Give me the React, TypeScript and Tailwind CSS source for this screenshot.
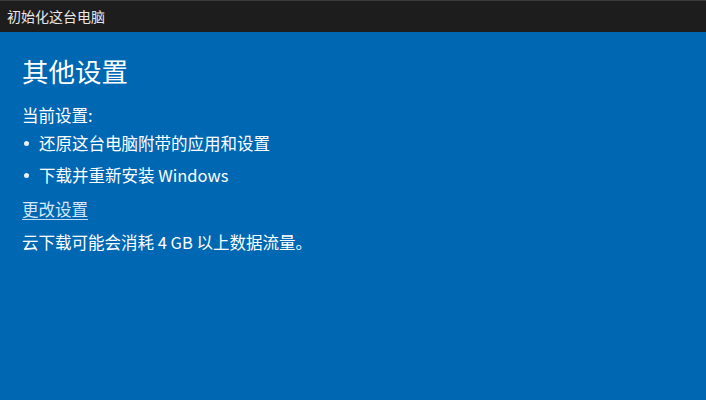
const font = { fontFamily: '"Noto Sans CJK SC", "Noto Sans", sans-serif' };

const Bullet = ({ children }: { children: React.ReactNode }) => (
  <div className="flex items-center h-[32px]">
    <span className="w-[17px] flex pl-[2px]">
      <span className="w-[5px] h-[5px] rounded-full bg-[#e9f1f8]" />
    </span>
    <span>{children}</span>
  </div>
);

export default function App() {
  return (
    <div className="w-[706px] h-[400px] flex flex-col bg-[#0067b3] text-white overflow-hidden" style={font}>
      <div className="h-[32px] shrink-0 bg-[#1e1d1e] border-t border-[#3a3a3a] flex items-center px-[7px] text-[14px] text-[#e8e8e8]">
        初始化这台电脑
      </div>
      <div className="px-[22px] pt-[20px] text-[16.5px] leading-none">
        <div className="text-[26.5px] leading-[38px] h-[40px]">其他设置</div>
        <div className="mt-[11px] h-[24px] flex items-center">当前设置:</div>
        <Bullet>还原这台电脑附带的应用和设置</Bullet>
        <Bullet>下载并重新安装 Windows</Bullet>
        <div className="mt-[2px] h-[33px] flex items-center">
          <span className="underline underline-offset-[3px] text-[#d6e8f7] decoration-[#c0dcf2]">更改设置</span>
        </div>
        <div className="h-[32px] flex items-center">云下载可能会消耗 4 GB 以上数据流量。</div>
      </div>
    </div>
  );
}
